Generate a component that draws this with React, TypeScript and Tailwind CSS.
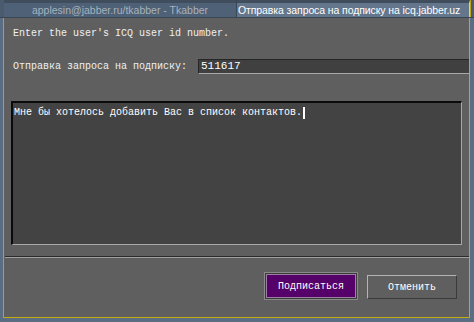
export default function App() {
  const mono = { fontFamily: '"Liberation Mono", "DejaVu Sans Mono", monospace' };
  return (
    <div className="w-[474px] h-[322px] bg-[#5b6d82] overflow-hidden flex flex-col">
      {/* title bar */}
      <div
        className="h-[18px] flex border-b border-[#3a4654] text-[10.5px] leading-[14px]"
        style={{ fontFamily: '"Liberation Sans", Arial, sans-serif' }}
      >
        <div className="w-[4px] bg-[#4a5b6e]" />
        <div className="w-[232px] bg-[#4e6176] border-t-[3px] border-[#3f4d5d] flex justify-center items-center text-[#a6b2bd]">
          applesin@jabber.ru/tkabber - Tkabber
        </div>
        <div className="w-[1px] bg-[#3a4654]" />
        <div className="flex-1 bg-[#63768b] border-t-[3px] border-[#3f4d5d] border-r border-r-[#c9cfd6] flex items-center pl-[1px] text-white whitespace-nowrap overflow-hidden tracking-[-0.1px]">
          Отправка запроса на подписку на icq.jabber.uz
        </div>
        <div className="w-[4px] bg-[#4a5b6e] border-l border-[#b9a41a]" />
      </div>

      {/* window body */}
      <div className="flex-1 flex pb-[4px]">
        <div className="w-[3px] bg-[#5b6d82]" />
        <div className="w-[1px] bg-[#b8a21c]" />
        <div className="flex-1 flex flex-col bg-[#5f5f5f] border-b border-[#c4ac10] text-[10px] text-[#f0f0f0]" style={mono}>
          <div className="pl-[9px] pt-[10px] leading-[12px]">Enter the user's ICQ user id number.</div>

          <div className="flex items-center mt-[19px] pl-[9px] h-[15px]">
            <span className="w-[185px] leading-[12px]">Отправка запроса на подписку:</span>
            <div className="flex-1 h-[15px] bg-[#404040] border-t border-l border-[#262626] border-b border-b-[#a9a9a9] pl-[2px] text-[11px] leading-[13px] text-white">
              511617
            </div>
          </div>

          <div className="mt-[27px] ml-[7px] mr-[7px] h-[144px] bg-[#434343] border-t-2 border-l-2 border-[#0a0a0a] border-b border-r border-b-[#a8a8a8] border-r-[#a8a8a8] pl-[1px] pt-[4px] leading-[12px] text-white flex">
            <span>Мне бы хотелось добавить Вас в список контактов.</span>
            <span className="w-[2px] h-[12px] bg-white ml-[1px]" />
          </div>

          <div className="mt-[11px] ml-[1px] border-t border-[#2c2c2c]" />
          <div className="ml-[1px] border-t border-[#a0a0a0]" />

          <div className="flex justify-end gap-[9px] pr-[12px] mt-[14px]">
            <div className="p-[1px] border border-[#8a8a8a] bg-[#3a3a3a]">
              <div className="w-[90px] h-[24px] bg-[#56006a] border border-[#9a7fa0] flex items-center justify-center text-white">
                Подписаться
              </div>
            </div>
            <div className="mt-[3px] w-[90px] h-[24px] bg-[#5f5f5f] border border-[#b4b4b4] border-b-[#3a3a3a] border-r-[#3a3a3a] flex items-center justify-center text-white">
              Отменить
            </div>
          </div>
        </div>
        <div className="w-[1px] bg-[#c4ac10]" />
        <div className="w-[4px] bg-[#5b6d82]" />
      </div>
    </div>
  );
}
